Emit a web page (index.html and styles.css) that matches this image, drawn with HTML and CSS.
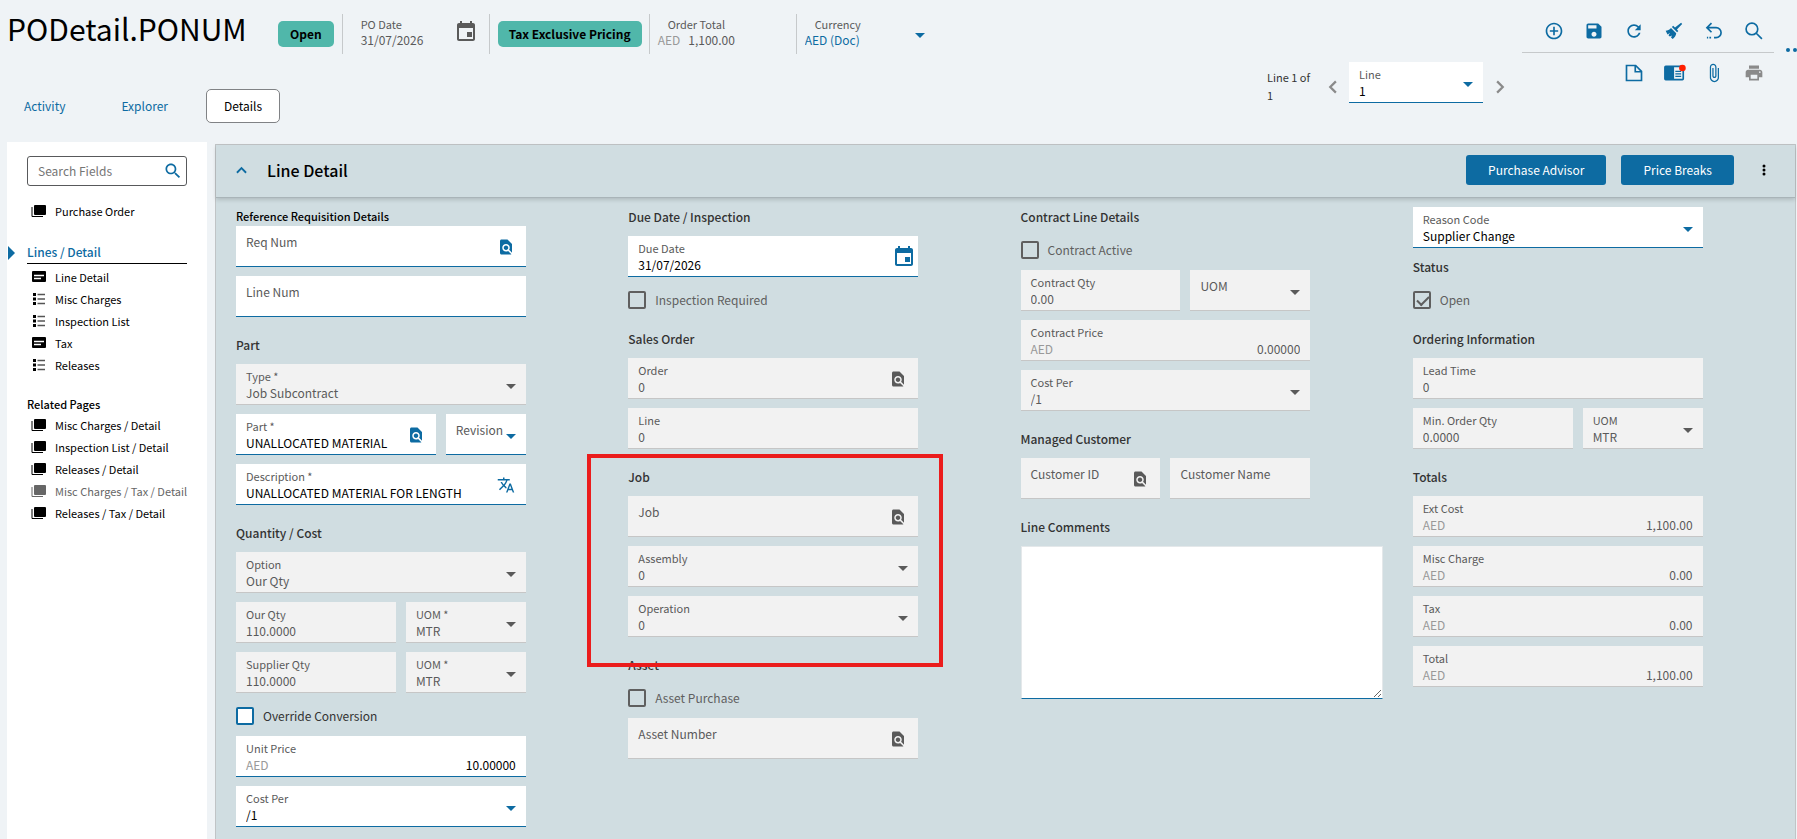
FILE: index.html
```html
<!DOCTYPE html>
<html lang="en">
<head>
    <meta charset="UTF-8">
    <meta name="viewport" content="width=device-width, initial-scale=1.0">
    <title>PODetail.PONUM</title>
    <link rel="stylesheet" href="styles.css">
</head>
<body>
    <svg class="sprite" aria-hidden="true">
        <symbol id="caret" viewBox="0 0 10 5"><path d="M0 0h10L5 5z"/></symbol>
        <symbol id="lookup" viewBox="0 0 24 24"><path d="M20 19.59V8l-6-6H6c-1.1 0-1.99.9-1.99 2L4 20c0 1.1.89 2 1.99 2H18c.45 0 .85-.15 1.19-.4l-4.43-4.43c-.8.52-1.74.83-2.76.83-2.76 0-5-2.24-5-5s2.24-5 5-5 5 2.24 5 5c0 1.02-.31 1.96-.83 2.75L20 19.59zM9 13c0 1.66 1.34 3 3 3s3-1.34 3-3-1.34-3-3-3-3 1.34-3 3z"/></symbol>
        <symbol id="calendar" viewBox="0 0 24 24"><path d="M18 12h-5v5h5v-5zM16 1v2H8V1H6v2H5c-1.11 0-1.99.9-1.99 2L3 19c0 1.1.89 2 2 2h14c1.1 0 2-.9 2-2V5c0-1.1-.9-2-2-2h-1V1h-2zm3 18H5V8h14v11z"/></symbol>
        <symbol id="translate" viewBox="0 0 24 24"><path d="M12.87 15.07l-2.54-2.51.03-.03c1.74-1.94 2.98-4.17 3.71-6.53H17V4h-7V2H8v2H1v1.99h11.17C11.5 7.92 10.44 9.75 9 11.35 8.07 10.32 7.3 9.19 6.69 8h-2c.73 1.63 1.73 3.17 2.98 4.56l-5.09 5.02L4 19l5-5 3.11 3.11.76-2.04zM18.5 10h-2L12 22h2l1.12-3h4.75L21 22h2l-4.5-12zm-2.62 7l1.62-4.33L19.12 17h-3.24z"/></symbol>
        <symbol id="search" viewBox="0 0 24 24"><path d="M15.5 14h-.79l-.28-.27C15.41 12.59 16 11.11 16 9.5 16 5.91 13.09 3 9.5 3S3 5.91 3 9.5 5.91 16 9.5 16c1.61 0 3.09-.59 4.23-1.57l.27.28v.79l5 4.99L20.49 19l-4.99-5zm-6 0C7.01 14 5 11.99 5 9.5S7.01 5 9.5 5 14 7.01 14 9.5 11.99 14 9.5 14z"/></symbol>
        <symbol id="pages" viewBox="0 0 16 14"><path d="M4 1h10a1 1 0 0 1 1 1v8a1 1 0 0 1-1 1H4a1 1 0 0 1-1-1V2a1 1 0 0 1 1-1z"/><path d="M1 3v9.500h11" fill="none" stroke="currentColor"/></symbol>
        <symbol id="card" viewBox="0 0 16 14"><path d="M2 1h12a1 1 0 0 1 1 1v9a1 1 0 0 1-1 1H2a1 1 0 0 1-1-1V2a1 1 0 0 1 1-1z"/><path d="M3 5.500h10M3 8.500h7" stroke="#fff" stroke-width="1.300"/></symbol>
        <symbol id="list" viewBox="0 0 16 14"><path d="M2 1h3v3H2zM2 5.500h3v3H2zM2 10h3v3H2z"/><path d="M6.500 2.500H14M6.500 7H14M6.500 11.500H14" stroke="#555" stroke-width="1.600"/></symbol>
    </svg>

    <header class="page-header">
        <div class="header-main">
            <div class="title-row">
                <h1>PODetail.PONUM</h1>
                <span class="chip">Open</span>
                <div class="summary">
                    <div class="summary-text">
                        <span class="summary-label">PO Date</span>
                        <span>31/07/2026</span>
                    </div>
                    <svg class="icon-24"><use href="#calendar"/></svg>
                </div>
                <div class="summary pricing"><span class="chip">Tax Exclusive Pricing</span></div>
                <div class="summary amount">
                    <div class="summary-text">
                        <span class="summary-label">Order Total</span>
                        <span><span class="muted">AED</span>1,100.00</span>
                    </div>
                </div>
                <div class="summary amount currency">
                    <div class="summary-text">
                        <label class="summary-label" for="currency">Currency</label>
                        <select id="currency"><option>AED (Doc)</option></select>
                    </div>
                    <svg class="caret"><use href="#caret"/></svg>
                </div>
            </div>
            <nav class="tabs">
                <button class="tab">Activity</button>
                <button class="tab">Explorer</button>
                <button class="tab active">Details</button>
            </nav>
        </div>

        <div class="line-nav">
            <span class="line-count">Line 1 of 1</span>
            <button class="step" aria-label="Previous line"><svg viewBox="0 0 8 12"><path d="M7 1L2 6l5 5"/></svg></button>
            <div class="field">
                <label for="line">Line</label>
                <select id="line"><option>1</option></select>
                <svg class="caret"><use href="#caret"/></svg>
            </div>
            <button class="step" aria-label="Next line"><svg viewBox="0 0 8 12"><path d="M1 1l5 5-5 5"/></svg></button>
        </div>

        <div class="toolbar">
            <div class="tool-row">
                <button class="tool" aria-label="New"><svg viewBox="0 0 24 24"><path d="M13 7h-2v4H7v2h4v4h2v-4h4v-2h-4V7zm-1-5C6.480 2 2 6.480 2 12s4.480 10 10 10 10-4.480 10-10S17.520 2 12 2zm0 18c-4.410 0-8-3.590-8-8s3.590-8 8-8 8 3.590 8 8-3.590 8-8 8z"/></svg></button>
                <button class="tool" aria-label="Save"><svg viewBox="0 0 24 24"><path d="M17 3H5c-1.110 0-2 .9-2 2v14c0 1.100.89 2 2 2h14c1.100 0 2-.9 2-2V7l-4-4zm-5 16c-1.660 0-3-1.340-3-3s1.340-3 3-3 3 1.340 3 3-1.340 3-3 3zm3-10H5V5h10v4z"/></svg></button>
                <button class="tool" aria-label="Refresh"><svg viewBox="0 0 24 24"><path d="M17.65 6.35C16.2 4.900 14.210 4 12 4c-4.420 0-7.990 3.580-7.990 8s3.570 8 7.990 8c3.730 0 6.840-2.550 7.730-6h-2.080c-.82 2.330-3.040 4-5.650 4-3.310 0-6-2.690-6-6s2.690-6 6-6c1.660 0 3.140.69 4.220 1.780L13 11h7V4l-2.350 2.350z"/></svg></button>
                <button class="tool" aria-label="Clear"><svg viewBox="0 0 24 24"><path d="M20.500 2.200l1.300 1.300-6.300 6.700 1.700 1.700-1.500 1.500-6.200-6.200L11 5.700l2.200 2.200zM8.400 8.300l6.300 6.300c-.4 2.800-2 5.200-4.200 6.900l-2.100-1.700 1.200-2.400-2.600 1.300-1.700-1.500 2.100-3-3.200 1.900L2 11.600c2.100-.2 4.600-1.100 6.400-3.300z"/></svg></button>
                <button class="tool" aria-label="Undo"><svg viewBox="0 0 24 24"><path d="M9 2.500L3.500 8 9 13.500M4 8h10.500a5.500 5.500 0 0 1 0 12H12M8.500 20h-2M5 20H3.500" fill="none" stroke="currentColor" stroke-width="2"/></svg></button>
                <button class="tool" aria-label="Search"><svg viewBox="0 0 24 24"><path d="M15 15l6.500 6.500M16.500 9.500a7 7 0 1 1-14 0 7 7 0 0 1 14 0z" fill="none" stroke="currentColor" stroke-width="2"/></svg></button>
            </div>
            <div class="tool-row">
                <button class="tool" aria-label="Memo"><svg viewBox="0 0 24 24"><path d="M3 3h11l7 7v11H3zM13.500 3v7.500H21" fill="none" stroke="currentColor" stroke-width="2"/></svg></button>
                <button class="tool" aria-label="Notes"><svg class="notes" viewBox="0 0 27 24"><path d="M3 3h20a2 2 0 0 1 2 2v14a2 2 0 0 1-2 2H3a2 2 0 0 1-2-2V5a2 2 0 0 1 2-2zm10 2v14h10V5z"/><path d="M14.500 10h7M14.500 13h7M14.500 16h7" stroke="currentColor" stroke-width="1.500"/><circle cx="23" cy="6" r="4" fill="#ff1e00"/></svg></button>
                <button class="tool" aria-label="Attachments"><svg viewBox="0 0 24 24"><path d="M16.500 6v11.500c0 2.210-1.790 4-4 4s-4-1.790-4-4V5c0-1.380 1.120-2.500 2.500-2.500s2.500 1.120 2.500 2.500v10.500c0 .55-.45 1-1 1s-1-.45-1-1V6H10v9.500c0 1.380 1.120 2.500 2.500 2.500s2.500-1.120 2.500-2.500V5c0-2.210-1.790-4-4-4S7 2.790 7 5v12.500c0 3.040 2.460 5.500 5.500 5.500s5.500-2.460 5.500-5.500V6h-1.500z"/></svg></button>
                <button class="tool" aria-label="Print" disabled><svg viewBox="0 0 24 24"><path d="M19 8H5c-1.660 0-3 1.340-3 3v6h4v4h12v-4h4v-6c0-1.660-1.340-3-3-3zm-3 11H8v-5h8v5zm3-7c-.55 0-1-.45-1-1s.45-1 1-1 1 .45 1 1-.45 1-1 1zm-1-9H6v4h12V3z"/></svg></button>
            </div>
        </div>
        <button class="more" aria-label="More"><svg viewBox="0 0 18 4"><circle cx="2" cy="2" r="2"/><circle cx="9" cy="2" r="2"/><circle cx="16" cy="2" r="2"/></svg></button>
    </header>

    <main class="content">
        <aside class="sidebar">
            <div class="search-box">
                <input type="text" placeholder="Search Fields" aria-label="Search Fields">
                <svg><use href="#search"/></svg>
            </div>
            <ul class="tree">
                <li><a href="#"><svg><use href="#pages"/></svg>Purchase Order</a></li>
            </ul>
            <h2 class="tree-current">Lines / Detail</h2>
            <ul class="tree">
                <li><a href="#"><svg><use href="#card"/></svg>Line Detail</a></li>
                <li><a href="#"><svg><use href="#list"/></svg>Misc Charges</a></li>
                <li><a href="#"><svg><use href="#list"/></svg>Inspection List</a></li>
                <li><a href="#"><svg><use href="#card"/></svg>Tax</a></li>
                <li><a href="#"><svg><use href="#list"/></svg>Releases</a></li>
            </ul>
            <h3 class="tree-heading">Related Pages</h3>
            <ul class="tree">
                <li><a href="#"><svg><use href="#pages"/></svg>Misc Charges / Detail</a></li>
                <li><a href="#"><svg><use href="#pages"/></svg>Inspection List / Detail</a></li>
                <li><a href="#"><svg><use href="#pages"/></svg>Releases / Detail</a></li>
                <li><a href="#" class="dimmed"><svg><use href="#pages"/></svg>Misc Charges / Tax / Detail</a></li>
                <li><a href="#"><svg><use href="#pages"/></svg>Releases / Tax / Detail</a></li>
            </ul>
        </aside>

        <section class="panel">
            <div class="panel-header">
                <svg class="collapse" viewBox="0 0 12 8"><path d="M1 7l5-5 5 5"/></svg>
                <h2>Line Detail</h2>
                <button class="primary">Purchase Advisor</button>
                <button class="primary">Price Breaks</button>
                <button class="kebab" aria-label="Panel menu"><svg viewBox="0 0 4 12"><circle cx="2" cy="2" r="1.500"/><circle cx="2" cy="6" r="1.500"/><circle cx="2" cy="10" r="1.500"/></svg></button>
            </div>

            <div class="panel-body">
                <div class="column">
                    <h4 class="reference">Reference Requisition Details</h4>
                    <div class="field empty">
                        <label for="req-num">Req Num</label>
                        <input id="req-num" type="text">
                        <svg class="lookup"><use href="#lookup"/></svg>
                    </div>
                    <div class="field empty">
                        <label for="line-num">Line Num</label>
                        <input id="line-num" type="text">
                    </div>

                    <h3>Part</h3>
                    <div class="field disabled">
                        <label for="type">Type *</label>
                        <select id="type" disabled><option>Job Subcontract</option></select>
                        <svg class="caret"><use href="#caret"/></svg>
                    </div>
                    <div class="row part-row">
                        <div class="field">
                            <label for="part">Part *</label>
                            <input id="part" type="text" value="UNALLOCATED MATERIAL">
                            <svg class="lookup"><use href="#lookup"/></svg>
                        </div>
                        <div class="field empty">
                            <label for="revision">Revision</label>
                            <select id="revision"><option></option></select>
                            <svg class="caret"><use href="#caret"/></svg>
                        </div>
                    </div>
                    <div class="field">
                        <label for="description">Description *</label>
                        <input id="description" type="text" value="UNALLOCATED MATERIAL FOR LENGTH">
                        <svg class="translate"><use href="#translate"/></svg>
                    </div>

                    <h3>Quantity / Cost</h3>
                    <div class="field disabled">
                        <label for="option">Option</label>
                        <select id="option" disabled><option>Our Qty</option></select>
                        <svg class="caret"><use href="#caret"/></svg>
                    </div>
                    <div class="row qty-row">
                        <div class="field disabled">
                            <label for="our-qty">Our Qty</label>
                            <input id="our-qty" type="text" value="110.0000" disabled>
                        </div>
                        <div class="field disabled">
                            <label for="our-uom">UOM *</label>
                            <select id="our-uom" disabled><option>MTR</option></select>
                            <svg class="caret"><use href="#caret"/></svg>
                        </div>
                    </div>
                    <div class="row qty-row">
                        <div class="field disabled">
                            <label for="supplier-qty">Supplier Qty</label>
                            <input id="supplier-qty" type="text" value="110.0000" disabled>
                        </div>
                        <div class="field disabled">
                            <label for="supplier-uom">UOM *</label>
                            <select id="supplier-uom" disabled><option>MTR</option></select>
                            <svg class="caret"><use href="#caret"/></svg>
                        </div>
                    </div>
                    <label class="check"><input type="checkbox">Override Conversion</label>
                    <div class="field money">
                        <label for="unit-price">Unit Price</label>
                        <span class="prefix">AED</span>
                        <input id="unit-price" type="text" value="10.00000">
                    </div>
                    <div class="field">
                        <label for="cost-per">Cost Per</label>
                        <select id="cost-per"><option>/1</option></select>
                        <svg class="caret"><use href="#caret"/></svg>
                    </div>
                </div>

                <div class="column">
                    <h3>Due Date / Inspection</h3>
                    <div class="field">
                        <label for="due-date">Due Date</label>
                        <input id="due-date" type="text" value="31/07/2026">
                        <svg class="icon-24"><use href="#calendar"/></svg>
                    </div>
                    <label class="check disabled"><input type="checkbox" disabled>Inspection Required</label>

                    <h3>Sales Order</h3>
                    <div class="field disabled">
                        <label for="sales-order">Order</label>
                        <input id="sales-order" type="text" value="0" disabled>
                        <svg class="lookup"><use href="#lookup"/></svg>
                    </div>
                    <div class="field disabled">
                        <label for="sales-line">Line</label>
                        <input id="sales-line" type="text" value="0" disabled>
                    </div>

                    <div class="job-group">
                        <h3>Job</h3>
                        <div class="field empty disabled">
                            <label for="job">Job</label>
                            <input id="job" type="text" disabled>
                            <svg class="lookup"><use href="#lookup"/></svg>
                        </div>
                        <div class="field disabled">
                            <label for="assembly">Assembly</label>
                            <select id="assembly" disabled><option>0</option></select>
                            <svg class="caret"><use href="#caret"/></svg>
                        </div>
                        <div class="field disabled">
                            <label for="operation">Operation</label>
                            <select id="operation" disabled><option>0</option></select>
                            <svg class="caret"><use href="#caret"/></svg>
                        </div>
                    </div>

                    <h3>Asset</h3>
                    <label class="check disabled"><input type="checkbox" disabled>Asset Purchase</label>
                    <div class="field empty disabled">
                        <label for="asset-number">Asset Number</label>
                        <input id="asset-number" type="text" disabled>
                        <svg class="lookup"><use href="#lookup"/></svg>
                    </div>
                </div>

                <div class="column">
                    <h3>Contract Line Details</h3>
                    <label class="check disabled"><input type="checkbox" disabled>Contract Active</label>
                    <div class="row qty-row">
                        <div class="field disabled">
                            <label for="contract-qty">Contract Qty</label>
                            <input id="contract-qty" type="text" value="0.00" disabled>
                        </div>
                        <div class="field empty disabled">
                            <label for="contract-uom">UOM</label>
                            <select id="contract-uom" disabled><option></option></select>
                            <svg class="caret"><use href="#caret"/></svg>
                        </div>
                    </div>
                    <div class="field money disabled">
                        <label for="contract-price">Contract Price</label>
                        <span class="prefix">AED</span>
                        <input id="contract-price" type="text" value="0.00000" disabled>
                    </div>
                    <div class="field disabled">
                        <label for="contract-cost-per">Cost Per</label>
                        <select id="contract-cost-per" disabled><option>/1</option></select>
                        <svg class="caret"><use href="#caret"/></svg>
                    </div>

                    <h3>Managed Customer</h3>
                    <div class="row">
                        <div class="field empty disabled">
                            <label for="customer-id">Customer ID</label>
                            <input id="customer-id" type="text" disabled>
                            <svg class="lookup"><use href="#lookup"/></svg>
                        </div>
                        <div class="field empty disabled">
                            <label for="customer-name">Customer Name</label>
                            <input id="customer-name" type="text" disabled>
                        </div>
                    </div>

                    <h3><label for="comments">Line Comments</label></h3>
                    <textarea id="comments"></textarea>
                </div>

                <div class="column">
                    <div class="field reason">
                        <label for="reason">Reason Code</label>
                        <select id="reason"><option>Supplier Change</option></select>
                        <svg class="caret"><use href="#caret"/></svg>
                    </div>

                    <h3>Status</h3>
                    <label class="check disabled"><input type="checkbox" checked disabled>Open</label>

                    <h3>Ordering Information</h3>
                    <div class="field disabled">
                        <label for="lead-time">Lead Time</label>
                        <input id="lead-time" type="text" value="0" disabled>
                    </div>
                    <div class="row qty-row">
                        <div class="field disabled">
                            <label for="min-qty">Min. Order Qty</label>
                            <input id="min-qty" type="text" value="0.0000" disabled>
                        </div>
                        <div class="field disabled">
                            <label for="min-uom">UOM</label>
                            <select id="min-uom" disabled><option>MTR</option></select>
                            <svg class="caret"><use href="#caret"/></svg>
                        </div>
                    </div>

                    <h3>Totals</h3>
                    <div class="field money disabled">
                        <label for="ext-cost">Ext Cost</label>
                        <span class="prefix">AED</span>
                        <input id="ext-cost" type="text" value="1,100.00" disabled>
                    </div>
                    <div class="field money disabled">
                        <label for="misc-charge">Misc Charge</label>
                        <span class="prefix">AED</span>
                        <input id="misc-charge" type="text" value="0.00" disabled>
                    </div>
                    <div class="field money disabled">
                        <label for="tax">Tax</label>
                        <span class="prefix">AED</span>
                        <input id="tax" type="text" value="0.00" disabled>
                    </div>
                    <div class="field money disabled">
                        <label for="total">Total</label>
                        <span class="prefix">AED</span>
                        <input id="total" type="text" value="1,100.00" disabled>
                    </div>
                </div>
            </div>
        </section>
    </main>
</body>
</html>
```
FILE: styles.css
```css
* {
    box-sizing: border-box;
}
body {
    margin: 0;
    min-height: 100vh;
    display: flex;
    flex-direction: column;
    background-color: #eff3f6;
    color: #000;
    font-family: 'Noto Sans CJK SC', 'Noto Sans', sans-serif;
    font-size: 12px;
    line-height: 16px;
    overflow-x: hidden;
}
h1, h2, h3, h4, ul {
    margin: 0;
    padding: 0;
}
button, input, select, textarea {
    font: inherit;
    color: inherit;
    margin: 0;
    padding: 0;
    border: none;
    background: none;
}
select {
    appearance: none;
}
button {
    cursor: pointer;
}
svg {
    display: block;
    flex: none;
    fill: currentColor;
}
.sprite {
    position: absolute;
    width: 0;
    height: 0;
}
.icon-24 {
    width: 24px;
    height: 24px;
}
.caret {
    width: 10px;
    height: 5px;
}

/* Header */
.page-header {
    display: flex;
    height: 142px;
}
.header-main {
    flex: 1;
    padding-top: 14px;
}
.title-row {
    display: flex;
    align-items: center;
    height: 40px;
}
h1 {
    width: 278px;
    padding: 0 0 12px 7px;
    font-size: 30px;
    font-weight: 400;
    line-height: 40px;
    white-space: nowrap;
}
.chip {
    height: 26px;
    padding: 0 12px;
    border-radius: 5px;
    background-color: #50b7aa;
    font-weight: 700;
    line-height: 26px;
    white-space: nowrap;
}
.summary {
    display: flex;
    align-items: center;
    width: 147px;
    height: 40px;
    padding-left: 18px;
    border-left: 1px solid #c6c9cb;
    color: #5a5a5a;
}
.chip + .summary {
    margin-left: 8px;
}
.summary-text {
    flex: 1;
    display: flex;
    flex-direction: column;
    margin-bottom: 4px;
}
.summary-label {
    font-size: 11px;
}
.summary .icon-24 {
    margin: 0 11px 4px 0;
}
.summary.pricing {
    width: 160px;
    padding-left: 8px;
    color: #000;
}
.pricing .chip {
    padding: 0 11px;
}
.summary.amount {
    padding-left: 8px;
}
.amount .summary-label {
    padding-left: 10px;
}
.currency, .currency select {
    color: #0d6ba2;
}
.currency .summary-label {
    color: #5a5a5a;
}
.currency .caret {
    margin: 3px 18px 0 0;
}
.muted {
    margin-right: 8px;
    color: #999;
}
.tabs {
    display: flex;
    gap: 20px;
    margin-top: 35px;
    padding-left: 6px;
}
.tab {
    height: 34px;
    padding: 0 17px;
    border: 1px solid transparent;
    border-radius: 5px;
    color: #0d6ba2;
}
.tab.active {
    border-color: #808285;
    background-color: #fff;
    color: #000;
}
.line-nav {
    display: flex;
    align-items: flex-start;
    padding-top: 62px;
}
.line-count {
    width: 48px;
    padding-top: 6px;
    font-size: 11px;
    line-height: 18px;
    color: #333;
}
.step {
    width: 34px;
    height: 50px;
    color: #8a8a8a;
}
.step svg {
    width: 9px;
    height: 14px;
    margin: 0 auto;
    fill: none;
    stroke: currentColor;
    stroke-width: 2;
}
.line-nav .field {
    width: 134px;
}
.toolbar {
    width: 252px;
    margin: 10px 0 0 5px;
    color: #0d6ba2;
}
.tool-row {
    display: flex;
    justify-content: flex-end;
}
.tool-row:first-child {
    border-bottom: 1px solid #c6c9cb;
}
.tool {
    width: 40px;
    height: 42px;
}
.tool-row:last-child .tool {
    height: 40px;
}
.tool svg {
    width: 20px;
    height: 20px;
    margin: 0 auto;
}
.tool .notes {
    width: 23px;
}
.tool:disabled {
    color: #8a8a8a;
}
.more {
    width: 23px;
    height: 100px;
    padding-left: 12px;
    overflow: hidden;
    color: #0d6ba2;
}
.more svg {
    width: 18px;
    height: 4px;
}

/* Sidebar */
.content {
    flex: 1;
    display: flex;
    align-items: stretch;
}
.sidebar {
    width: 200px;
    margin-left: 7px;
    padding: 14px 20px 0;
    background-color: #fff;
}
.search-box {
    display: flex;
    align-items: center;
    height: 30px;
    margin-bottom: 14px;
    padding: 0 3px 0 10px;
    border: 1px solid #58595b;
    border-radius: 3px;
}
.search-box input {
    flex: 1;
    min-width: 0;
}
.search-box input::placeholder {
    color: #757575;
    opacity: 1;
}
.search-box svg {
    width: 20px;
    height: 20px;
    color: #0d6ba2;
}
.tree {
    list-style: none;
    font-size: 11px;
}
.tree a {
    display: flex;
    align-items: center;
    gap: 8px;
    height: 22px;
    padding-left: 4px;
    color: #000;
    text-decoration: none;
    white-space: nowrap;
}
.tree svg {
    width: 16px;
    height: 14px;
}
.tree .dimmed {
    color: #666;
}
.tree-current {
    position: relative;
    margin: 19px 0 2px;
    border-bottom: 1px solid #000;
    color: #0d6ba2;
    font-size: 12px;
    font-weight: 500;
    line-height: 22px;
}
.tree-current::before {
    content: '';
    position: absolute;
    left: -19px;
    top: 5px;
    border: 7px solid transparent;
    border-right: none;
    border-left-color: #0d6ba2;
}
.tree-heading {
    margin-top: 19px;
    font-size: 11px;
    font-weight: 500;
    line-height: 19px;
}

/* Line Detail panel */
.panel {
    flex: 1;
    margin: 2px 1px 0 8px;
    border: 1px solid #c0c4c6;
    border-bottom: none;
    background-color: #d0dde1;
}
.panel-header {
    display: flex;
    align-items: center;
    height: 53px;
    padding: 0 24px 2px 20px;
    border-bottom: 1px solid #a9b4b8;
    box-shadow: 0 2px 4px rgba(0, 0, 0, 0.15);
}
.collapse {
    width: 11px;
    height: 8px;
    fill: none;
    stroke: #0d6ba2;
    stroke-width: 2;
}
.panel-header h2 {
    flex: 1;
    margin-left: 20px;
    font-size: 16px;
    font-weight: 500;
    line-height: 24px;
}
.primary {
    height: 30px;
    margin-right: 15px;
    padding: 0 22px;
    border-radius: 3px;
    background-color: #0d6ba2;
    color: #fff;
}
.kebab {
    width: 14px;
    margin-left: 8px;
}
.kebab svg {
    width: 4px;
    height: 12px;
    margin: 0 auto;
}
.panel-body {
    display: grid;
    grid-template-columns: repeat(4, 1fr);
    gap: 30px;
    padding: 0 20px;
}
.panel-body h3 {
    color: #333;
    font-size: 12px;
    font-weight: 500;
    line-height: 38px;
}
.panel-body .reference {
    padding: 9px 0 1px;
    font-size: 11px;
    font-weight: 500;
    line-height: 18px;
}

/* Fields take 80% of a column */
.field {
    display: grid;
    grid-template-columns: auto 1fr auto;
    grid-template-rows: 17px 16px;
    width: 80%;
    height: 41px;
    padding: 4px 10px 0;
    border-bottom: 1px solid #0d6ba2;
    background-color: #fff;
}
.column .field {
    margin-bottom: 9px;
}
.field label {
    grid-column: 1 / 3;
    color: #5a5a5a;
    font-size: 11px;
    white-space: nowrap;
}
.field input, .field select {
    grid-column: 1 / 3;
    grid-row: 2;
    width: 100%;
    min-width: 0;
    height: 16px;
}
.field svg {
    grid-column: 3;
    grid-row: 1 / 3;
    align-self: center;
    color: #0d6ba2;
}
.field .caret {
    margin-top: 3px;
}
.field .lookup, .field .translate {
    width: 18px;
    height: 18px;
    margin-right: 1px;
}
.field .icon-24 {
    margin-right: -8px;
}
.field.empty {
    grid-template-rows: 24px 9px;
}
.field.empty label {
    font-size: 12px;
    line-height: 24px;
}
.field.empty input, .field.empty select {
    height: 9px;
}
.field.money .prefix {
    grid-row: 2;
    color: #999;
}
.field.money input {
    grid-column: 2 / 4;
    text-align: right;
}
.field.disabled {
    border-bottom-color: #c6c6c6;
    background-color: #f2f2f2;
}
.field.disabled input, .field.disabled select, .field.disabled svg {
    color: #5a5a5a;
    opacity: 1;
}
.field.reason {
    margin-top: 9px;
    margin-bottom: 0;
}
.row {
    display: grid;
    grid-template-columns: 1fr 1fr;
    gap: 10px;
    width: 80%;
}
.row .field {
    width: 100%;
}
.part-row {
    grid-template-columns: 5fr 2fr;
}
.qty-row {
    grid-template-columns: 4fr 3fr;
}
.check {
    display: flex;
    align-items: center;
    gap: 9px;
    height: 28px;
    margin-bottom: 6px;
    color: #333;
}
.check input {
    appearance: none;
    width: 18px;
    height: 18px;
    border: 2px solid #0d6ba2;
    border-radius: 2px;
    background-color: #fff;
}
.check.disabled {
    color: #5f5f5f;
}
.check.disabled input {
    border-color: #5f5f5f;
    background-color: transparent;
}
.check input:checked::before {
    content: '';
    display: block;
    width: 10px;
    height: 5px;
    margin: 3px 0 0 2px;
    border: solid #5f5f5f;
    border-width: 0 0 2px 2px;
    transform: rotate(-45deg);
}
textarea {
    display: block;
    width: 100%;
    height: 153px;
    border: 1px solid #e4e8ea;
    border-bottom-color: #0d6ba2;
    background-color: #fff;
}

/* Highlight frame round the job fields */
.job-group {
    position: relative;
    width: 80%;
}
.job-group .field {
    width: 100%;
}
.job-group::after {
    content: '';
    position: absolute;
    top: -4px;
    right: -25px;
    bottom: -30px;
    left: -41px;
    border: 4px solid #eb1c1c;
    pointer-events: none;
}
```
